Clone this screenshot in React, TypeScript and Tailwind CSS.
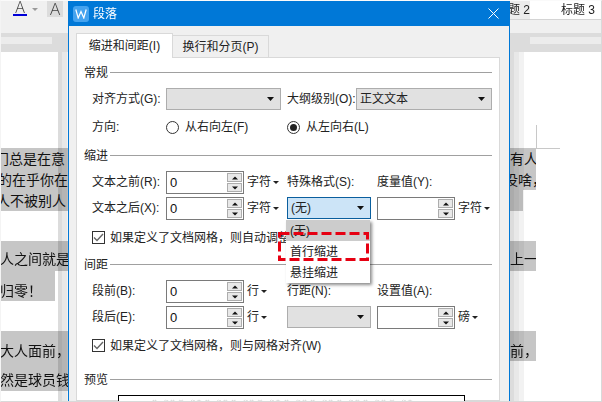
const cjk = "font-['Liberation_Sans','Noto_Sans_CJK_SC',sans-serif]";

function Caret({ small }: { small?: boolean }) {
  return small ? (
    <svg width="6" height="3" viewBox="0 0 6 3" className="ml-[2px] shrink-0"><path d="M0 0h6L3 3z" fill="#222" /></svg>
  ) : (
    <svg width="7" height="4" viewBox="0 0 7 4" className="shrink-0"><path d="M0 0h7L3.5 4z" fill="#111" /></svg>
  );
}

function Legend({ text }: { text: string }) {
  return (
    <div className="flex h-4 items-center gap-[2px]">
      <span className="w-6 text-xs leading-4 text-[#222]">{text}</span>
      <div className="mt-[-1px] h-px w-[382px] bg-[#a0a0a0]" />
    </div>
  );
}

function Label({ w, text }: { w: string; text: string }) {
  return <div className={`${w} shrink-0 text-xs leading-[22px] text-[#222]`}>{text}</div>;
}

function Select({ w, value, active }: { w: string; value?: string; active?: boolean }) {
  return (
    <div
      className={`${w} flex h-[22px] shrink-0 items-center justify-between pl-[3px] pr-[6px] text-xs ${
        active ? "border border-[#0a5f9e] bg-[#cce4f7]" : "border border-[#adadad] bg-[#e1e1e1]"
      } text-[#222]`}
    >
      <span>{value}</span>
      <Caret />
    </div>
  );
}

function Spin({ value, w = "w-[78px]" }: { value?: string; w?: string }) {
  return (
    <div className={`${w} flex h-[23px] shrink-0 items-center justify-between border border-[#7a7a7a] bg-white pl-[3px] pr-px text-[13px] text-[#111]`}>
      <span>{value}</span>
      <div className="flex flex-col gap-px">
        <div className="flex h-[9px] w-[15px] items-center justify-center border border-[#adadad] bg-[#e8e8e8]">
          <svg width="6" height="4" viewBox="0 0 6 4"><path d="M0 3.5h6L3 0.5z" fill="#111" /></svg>
        </div>
        <div className="flex h-[9px] w-[15px] items-center justify-center border border-[#adadad] bg-[#e8e8e8]">
          <svg width="6" height="4" viewBox="0 0 6 4"><path d="M0 0.5h6L3 3.5z" fill="#111" /></svg>
        </div>
      </div>
    </div>
  );
}

function Unit({ text, w = "w-[40px]" }: { text: string; w?: string }) {
  return (
    <div className={`${w} ml-[3px] flex h-[22px] shrink-0 items-center text-xs text-[#222]`}>
      {text}
      <Caret small />
    </div>
  );
}

function Check({ text }: { text: string }) {
  return (
    <div className="flex h-[17px] items-center gap-[5px] pl-[8px] text-xs text-[#222]">
      <div className="flex h-[13px] w-[13px] items-center justify-center border border-[#333] bg-white">
        <svg width="11" height="9" viewBox="0 0 11 9" fill="none"><path d="M1 4.5 4 7.5 10 1" stroke="#666" strokeWidth="1.4" /></svg>
      </div>
      <span className="whitespace-nowrap">{text}</span>
    </div>
  );
}

function Radio({ on, text, w }: { on?: boolean; text: string; w: string }) {
  return (
    <div className={`${w} flex h-[18px] shrink-0 items-center gap-[6px] text-xs text-[#222]`}>
      <div className="flex h-[13px] w-[13px] items-center justify-center rounded-full border border-[#333] bg-white">
        {on && <div className="h-[7px] w-[7px] rounded-full bg-[#222]" />}
      </div>
      <span>{text}</span>
    </div>
  );
}

function DocLine({ text, off, w, h, pt }: { text?: string; off?: string; w: string; h: string; pt?: string }) {
  return (
    <div className={`${w} ${h} ${pt ?? ""} flex items-center overflow-hidden whitespace-nowrap bg-[#c6c6c6] text-sm text-[#111]`}>
      <span className={off}>{text}</span>
    </div>
  );
}

function Gutter() {
  return (
    <div className="pointer-events-none absolute inset-y-0 left-0 flex w-[14px] mix-blend-multiply">
      <div className="w-[4px] bg-[#dcdcdc]" />
      <div className="w-[5px] bg-[#e8e8e8]" />
      <div className="w-[5px] bg-[#f2f2f2]" />
    </div>
  );
}

export default function App() {
  return (
    <div className={`relative h-[402px] w-[602px] overflow-hidden bg-white ${cjk}`}>
      {/* toolbar */}
      <div className="relative flex h-[20px] items-start bg-[#f0f0f0]">
        <div className="ml-[13px] flex w-[14px] flex-col items-center pt-[1px]">
          <span className="font-['Open_Sans'] text-[16px] font-light leading-[12px] text-[#444]">A</span>
          <div className="mt-px h-[2px] w-[14px] bg-[#0000d8]" />
        </div>
        <svg width="6" height="3" viewBox="0 0 6 3" className="ml-[5px] mt-[8px]"><path d="M0 0h6L3 3z" fill="#999" /></svg>
        <div className="ml-[9px] flex h-[17px] w-[16px] items-center justify-center bg-[#dcdcdc] font-['Open_Sans'] text-[17px] font-light text-[#444]">A</div>
        <div className="ml-auto flex h-[20px] w-[72px] items-center border-b border-[#d4d4d4] bg-white pl-[31px] text-xs text-[#222]">标题 3</div>
        <div className="absolute left-[508px] top-0 flex h-[20px] w-[22px] items-center whitespace-nowrap border-b border-[#d4d4d4] bg-[#ececec] text-xs text-[#222]">题 2</div>
      </div>
      <div className="h-[13px] bg-[#f0f0f0]" />
      <div className="flex h-[19px] bg-[#dcdcdc] pt-[4px]">
        <div className="h-[7px] w-[52px] bg-[#ececec]" />
        <div className="flex-1" />
        <div className="h-[7px] w-[72px] bg-[#ececec]" />
      </div>

      {/* document, around the dialog */}
      <div className="relative h-[350px] w-full">
        <div className="absolute inset-y-0 left-[58px]"><Gutter /></div>
        <div className="absolute inset-y-0 left-[510px]"><Gutter /></div>
        <div className="absolute left-0 top-[96px] mix-blend-multiply">
          <DocLine w="w-[68px]" h="h-[21px]" text="门总是在意" off="ml-[-5px]" />
          <DocLine w="w-[68px]" h="h-[21px]" text="的在乎你在" off="ml-[-2px]" />
          <DocLine w="w-[68px]" h="h-[21px]" text="人不被别人" off="ml-[-4px]" />
          <div className="h-[30px]" />
          <DocLine w="w-[68px]" h="h-[30px]" pt="pt-[6px]" text="人之间就是" />
          <DocLine w="w-[55px]" h="h-[30px]" pt="pt-[10px]" text="归零！" />
          <div className="h-[30px]" />
          <DocLine w="w-[68px]" h="h-[30px]" pt="pt-[10px]" text="大人面前，" />
          <DocLine w="w-[68px]" h="h-[30px]" pt="pt-[8px]" text="然是球员钱" />
        </div>
        <div className="absolute left-[510px] top-[96px] mix-blend-multiply">
          <DocLine w="w-[26px]" h="h-[21px]" text="有人" />
          <DocLine w="w-[26px]" h="h-[21px]" text="没啥，" off="ml-[-6px]" />
          <DocLine w="w-[13px]" h="h-[21px]" />
          <div className="h-[30px]" />
          <DocLine w="w-[26px]" h="h-[30px]" pt="pt-[6px]" text="上一" />
          <div className="h-[60px]" />
          <DocLine w="w-[26px]" h="h-[30px]" pt="pt-[10px]" text="前，" />
        </div>
        {/* crop mark */}
        <div className="absolute left-[536px] top-[73px] h-[23px] w-px bg-[#c8c8c8]" />
        <div className="absolute left-[536px] top-[96px] h-px w-[24px] bg-[#c8c8c8]" />
      </div>

      {/* dialog */}
      <div className="absolute left-[68px] top-px flex h-[401px] w-[442px] flex-col border-x border-[#0078d7] bg-[#f0f0f0]">
        <div className="flex h-[25px] shrink-0 items-center bg-[#0078d7] pl-[4px] pr-[10px]">
          <div className="flex h-4 w-4 items-center justify-center rounded-[3px] bg-[#45a3ef]">
            <svg width="12" height="10" viewBox="0 0 12 10" fill="none"><path d="M.8 .5 3.2 9 6 2.5 8.8 9 11.2 .5" stroke="#fff" strokeWidth="1.2" /></svg>
          </div>
          <span className="ml-[4px] text-xs text-white">段落</span>
          <svg width="11" height="11" viewBox="0 0 11 11" className="ml-auto"><path d="M.5.5l10 10M10.5.5l-10 10" stroke="#fff" strokeWidth="1" /></svg>
        </div>

        {/* tabs */}
        <div className="ml-[7px] mt-[7px] flex h-[24px] shrink-0 items-end">
          <div className="z-10 mb-[-1px] flex h-[25px] w-[97px] items-center justify-center border border-b-0 border-[#d9d9d9] bg-white text-xs text-[#222]">缩进和间距(I)</div>
          <div className="flex h-[22px] w-[96px] items-center justify-center border border-l-0 border-b-0 border-[#d9d9d9] bg-[#f0f0f0] text-xs text-[#222]">换行和分页(P)</div>
        </div>

        {/* panel */}
        <div className="relative ml-[7px] h-[344px] w-[424px] shrink-0 border border-[#d9d9d9] bg-white pl-[7px] pt-[7px]">
          <Legend text="常规" />
          <div className="mt-[7px] flex pl-[8px]">
            <Label w="w-[74px]" text="对齐方式(G):" />
            <Select w="w-[115px]" />
            <Label w="w-[69px] ml-[6px]" text="大纲级别(O):" />
            <Select w="w-[136px]" value="正文文本" />
          </div>
          <div className="mt-[8px] flex items-center pl-[8px]">
            <div className="w-[74px] text-xs text-[#222]">方向:</div>
            <Radio w="w-[121px]" text="从右向左(F)" />
            <Radio on w="w-[120px]" text="从左向右(L)" />
          </div>

          <div className="mt-[12px]"><Legend text="缩进" /></div>
          <div className="mt-[7px] flex pl-[8px]">
            <Label w="w-[74px]" text="文本之前(R):" />
            <Spin value="0" />
            <Unit text="字符" />
            <Label w="w-[90px]" text="特殊格式(S):" />
            <Label w="w-[80px]" text="度量值(Y):" />
          </div>
          <div className="mt-[3px] flex pl-[8px]">
            <Label w="w-[74px]" text="文本之后(X):" />
            <Spin value="0" />
            <Unit text="字符" />
            <Select w="w-[84px] mr-[6px]" value="(无)" active />
            <Spin />
            <Unit text="字符" />
          </div>
          <div className="mt-[9px]"><Check text="如果定义了文档网格，则自动调整右缩进(D)" /></div>

          <div className="mt-[11px]"><Legend text="间距" /></div>
          <div className="mt-[7px] flex pl-[8px]">
            <Label w="w-[74px]" text="段前(B):" />
            <Spin value="0" />
            <Unit text="行" />
            <Label w="w-[90px]" text="行距(N):" />
            <Label w="w-[80px]" text="设置值(A):" />
          </div>
          <div className="mt-[3px] flex pl-[8px]">
            <Label w="w-[74px]" text="段后(E):" />
            <Spin value="0" />
            <Unit text="行" />
            <Select w="w-[84px] mr-[6px]" />
            <Spin />
            <Unit text="磅" />
          </div>
          <div className="mt-[8px]"><Check text="如果定义了文档网格，则与网格对齐(W)" /></div>

          <div className="mt-[18px]"><Legend text="预览" /></div>
          <div className="ml-[34px] mt-[7px] h-[20px] w-[347px] overflow-hidden whitespace-nowrap border border-black bg-white pl-[33px] pt-[3px] text-[5px] leading-[6px] tracking-[1px] text-[#c4c4c4]">
            前一段落 前一段落 前一段落 前一段落 前一段落 前一段落 前一段落 前一段落 前一段落 前一段落
          </div>

          {/* dropdown list */}
          <div className="absolute left-[209px] top-[162px] w-[84px] bg-white text-xs text-[#222] shadow-[2px_2px_3px_rgba(0,0,0,0.45)]">
            <div className="flex h-[21px] items-center bg-[#cccccc] pl-1">(无)</div>
            <div className="flex h-[21px] items-center pl-1">首行缩进</div>
            <div className="flex h-[21px] items-center pl-1">悬挂缩进</div>
          </div>
          {/* red annotation */}
          <svg width="91" height="29" viewBox="0 0 91 29" fill="none" className="absolute left-[201px] top-[174px]">
            <rect x="1.5" y="1.5" width="88" height="26" stroke="#e60012" strokeWidth="3" strokeDasharray="10 4" />
          </svg>
        </div>
      </div>

      {/* image edge */}
      <div className="pointer-events-none absolute inset-0 border border-[#d9d9d9] border-l-[#f4f4f4] border-t-[#fafafa]" />
    </div>
  );
}
